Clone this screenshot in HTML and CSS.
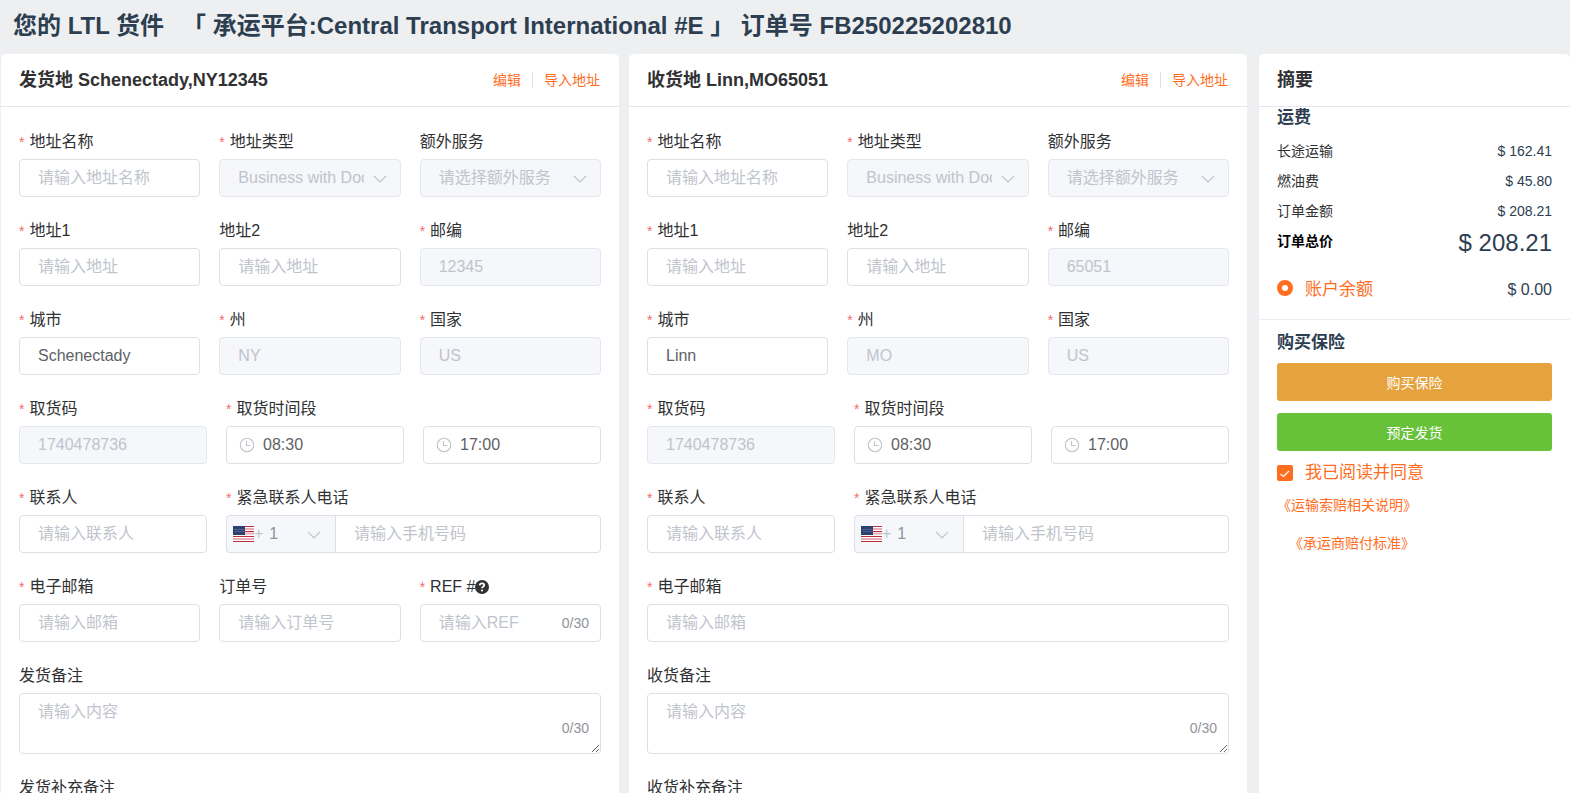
FILE: index.html
```html
<!DOCTYPE html>
<html lang="zh-CN">
<head>
<meta charset="utf-8">
<title>LTL 货件</title>
<link rel="stylesheet" href="styles.css">
</head>
<body>
<svg class="defs" aria-hidden="true">
  <symbol id="chevron" viewBox="0 0 14 8"><path d="M1 1l6 6 6-6" fill="none" stroke="currentColor" stroke-width="1.2"/></symbol>
  <symbol id="clock" viewBox="0 0 16 16"><circle cx="8" cy="8" r="6.7" fill="none" stroke="currentColor" stroke-width="1.1"/><path d="M7.5 4v4.500h4" fill="none" stroke="currentColor" stroke-width="1.1"/></symbol>
  <symbol id="flag" viewBox="0 0 21 16">
    <rect width="21" height="16" fill="#fff"/>
    <path d="M0 3h21M0 7.500h21M0 13h21" stroke="#e9aeb6" stroke-width="2"/>
    <path d="M0 .5h21M0 5.500h21M0 10.500h21M0 15.500h21" stroke="#b8303f" stroke-width="1"/>
    <rect width="12" height="9" fill="#2c4170"/>
    <path d="M1.500 3.500h10M2.500 5.500h9" stroke="#6f80a6" stroke-width="1" stroke-dasharray="1 1"/>
  </symbol>
  <symbol id="question" viewBox="0 0 14 14"><circle cx="7" cy="7" r="7" fill="#303133"/><path d="M4.700 5.400c.1-1.300 1.100-2 2.300-2s2.200.7 2.200 1.800c0 1.400-2.200 1.500-2.200 3" fill="none" stroke="#fff" stroke-width="1.800"/><circle cx="7" cy="10.500" r="1.100" fill="#fff"/></symbol>
</svg>

<header class="page-title">
  <h1><span>您的 LTL 货件</span><span class="platform">「 承运平台:Central Transport International #E 」 订单号 FB250225202810</span></h1>
</header>

<main class="layout">
  <div class="forms">
    <form class="panel">
      <div class="panel-head">
        <h2>发货地 Schenectady,NY12345</h2>
        <nav class="actions"><a href="#">编辑</a><a href="#">导入地址</a></nav>
      </div>
      <div class="panel-body">
        <div class="row thirds">
          <div class="field"><label class="required" for="s-name">地址名称</label><input id="s-name" type="text" placeholder="请输入地址名称"></div>
          <div class="field"><label class="required" for="s-type">地址类型</label><div class="control"><select id="s-type" disabled><option>Business with Dock</option></select><svg class="chevron"><use href="#chevron"/></svg></div></div>
          <div class="field"><label for="s-extra">额外服务</label><div class="control"><select id="s-extra" disabled><option>请选择额外服务</option></select><svg class="chevron"><use href="#chevron"/></svg></div></div>
        </div>
        <div class="row thirds">
          <div class="field"><label class="required" for="s-a1">地址1</label><input id="s-a1" type="text" placeholder="请输入地址"></div>
          <div class="field"><label for="s-a2">地址2</label><input id="s-a2" type="text" placeholder="请输入地址"></div>
          <div class="field"><label class="required" for="s-zip">邮编</label><input id="s-zip" type="text" value="12345" disabled></div>
        </div>
        <div class="row thirds">
          <div class="field"><label class="required" for="s-city">城市</label><input id="s-city" type="text" value="Schenectady"></div>
          <div class="field"><label class="required" for="s-state">州</label><input id="s-state" type="text" value="NY" disabled></div>
          <div class="field"><label class="required" for="s-country">国家</label><input id="s-country" type="text" value="US" disabled></div>
        </div>
        <div class="row split">
          <div class="field"><label class="required" for="s-code">取货码</label><input id="s-code" type="text" value="1740478736" disabled></div>
          <div class="field"><label class="required" for="s-from">取货时间段</label>
            <div class="times">
              <div class="control"><input id="s-from" class="time" type="text" value="08:30"><svg class="clock"><use href="#clock"/></svg></div>
              <div class="control"><input class="time" type="text" value="17:00" aria-label="结束时间"><svg class="clock"><use href="#clock"/></svg></div>
            </div>
          </div>
        </div>
        <div class="row split">
          <div class="field"><label class="required" for="s-contact">联系人</label><input id="s-contact" type="text" placeholder="请输入联系人"></div>
          <div class="field"><label class="required" for="s-phone">紧急联系人电话</label>
            <div class="phone">
              <div class="prefix"><svg class="flag"><use href="#flag"/></svg><span>+</span><select aria-label="国家区号"><option>1</option></select><svg class="chevron"><use href="#chevron"/></svg></div>
              <input id="s-phone" type="text" placeholder="请输入手机号码">
            </div>
          </div>
        </div>
        <div class="row thirds">
          <div class="field"><label class="required" for="s-mail">电子邮箱</label><input id="s-mail" type="text" placeholder="请输入邮箱"></div>
          <div class="field"><label for="s-order">订单号</label><input id="s-order" type="text" placeholder="请输入订单号"></div>
          <div class="field"><label class="required" for="s-ref">REF #<svg class="question"><use href="#question"/></svg></label><div class="control"><input id="s-ref" class="counted" type="text" placeholder="请输入REF"><span class="count">0/30</span></div></div>
        </div>
        <div class="row">
          <div class="field"><label for="s-note">发货备注</label><div class="control"><textarea id="s-note" placeholder="请输入内容"></textarea><span class="count low">0/30</span></div></div>
        </div>
        <div class="row">
          <div class="field"><label for="s-note2">发货补充备注</label><div class="control"><textarea id="s-note2" placeholder="请输入内容"></textarea></div></div>
        </div>
      </div>
    </form>

    <form class="panel">
      <div class="panel-head">
        <h2>收货地 Linn,MO65051</h2>
        <nav class="actions"><a href="#">编辑</a><a href="#">导入地址</a></nav>
      </div>
      <div class="panel-body">
        <div class="row thirds">
          <div class="field"><label class="required" for="r-name">地址名称</label><input id="r-name" type="text" placeholder="请输入地址名称"></div>
          <div class="field"><label class="required" for="r-type">地址类型</label><div class="control"><select id="r-type" disabled><option>Business with Dock</option></select><svg class="chevron"><use href="#chevron"/></svg></div></div>
          <div class="field"><label for="r-extra">额外服务</label><div class="control"><select id="r-extra" disabled><option>请选择额外服务</option></select><svg class="chevron"><use href="#chevron"/></svg></div></div>
        </div>
        <div class="row thirds">
          <div class="field"><label class="required" for="r-a1">地址1</label><input id="r-a1" type="text" placeholder="请输入地址"></div>
          <div class="field"><label for="r-a2">地址2</label><input id="r-a2" type="text" placeholder="请输入地址"></div>
          <div class="field"><label class="required" for="r-zip">邮编</label><input id="r-zip" type="text" value="65051" disabled></div>
        </div>
        <div class="row thirds">
          <div class="field"><label class="required" for="r-city">城市</label><input id="r-city" type="text" value="Linn"></div>
          <div class="field"><label class="required" for="r-state">州</label><input id="r-state" type="text" value="MO" disabled></div>
          <div class="field"><label class="required" for="r-country">国家</label><input id="r-country" type="text" value="US" disabled></div>
        </div>
        <div class="row split">
          <div class="field"><label class="required" for="r-code">取货码</label><input id="r-code" type="text" value="1740478736" disabled></div>
          <div class="field"><label class="required" for="r-from">取货时间段</label>
            <div class="times">
              <div class="control"><input id="r-from" class="time" type="text" value="08:30"><svg class="clock"><use href="#clock"/></svg></div>
              <div class="control"><input class="time" type="text" value="17:00" aria-label="结束时间"><svg class="clock"><use href="#clock"/></svg></div>
            </div>
          </div>
        </div>
        <div class="row split">
          <div class="field"><label class="required" for="r-contact">联系人</label><input id="r-contact" type="text" placeholder="请输入联系人"></div>
          <div class="field"><label class="required" for="r-phone">紧急联系人电话</label>
            <div class="phone">
              <div class="prefix"><svg class="flag"><use href="#flag"/></svg><span>+</span><select aria-label="国家区号"><option>1</option></select><svg class="chevron"><use href="#chevron"/></svg></div>
              <input id="r-phone" type="text" placeholder="请输入手机号码">
            </div>
          </div>
        </div>
        <div class="row">
          <div class="field"><label class="required" for="r-mail">电子邮箱</label><input id="r-mail" type="text" placeholder="请输入邮箱"></div>
        </div>
        <div class="row">
          <div class="field"><label for="r-note">收货备注</label><div class="control"><textarea id="r-note" placeholder="请输入内容"></textarea><span class="count low">0/30</span></div></div>
        </div>
        <div class="row">
          <div class="field"><label for="r-note2">收货补充备注</label><div class="control"><textarea id="r-note2" placeholder="请输入内容"></textarea></div></div>
        </div>
      </div>
    </form>
  </div>

  <aside class="panel summary">
    <div class="panel-head"><h2>摘要</h2></div>
    <section class="costs">
      <h3>运费</h3>
      <dl>
        <div><dt>长途运输</dt><dd>$ 162.41</dd></div>
        <div><dt>燃油费</dt><dd>$ 45.80</dd></div>
        <div><dt>订单金额</dt><dd>$ 208.21</dd></div>
        <div class="total"><dt>订单总价</dt><dd>$ 208.21</dd></div>
      </dl>
      <div class="balance">
        <label class="choice"><input type="radio" name="pay" checked>账户余额</label>
        <span>$ 0.00</span>
      </div>
    </section>
    <section class="checkout">
      <h3>购买保险</h3>
      <button class="insure" type="button">购买保险</button>
      <button class="book" type="button">预定发货</button>
      <label class="choice agree"><span class="tick"><input type="checkbox" checked><svg viewBox="0 0 16 16"><path d="M3.500 9l3 2.500L12 6" fill="none" stroke="#fff" stroke-width="1.200"/></svg></span>我已阅读并同意</label>
      <a class="terms" href="#">《运输索赔相关说明》</a>
      <a class="terms inset" href="#">《承运商赔付标准》</a>
    </section>
  </aside>
</main>
</body>
</html>
```

FILE: styles.css
```css
* { box-sizing: border-box; }

body {
  display: flex;
  flex-direction: column;
  height: 100vh;
  margin: 0;
  overflow: hidden;
  background: #edeff1;
  color: #2c3e50;
  font-family: "Liberation Sans", "Noto Sans CJK SC", sans-serif;
  font-size: 16px;
}

h1, h2, h3, dl, dd { margin: 0; }
a { color: #ff6d1f; text-decoration: none; }
.defs { display: none; }

.page-title {
  flex: none;
  padding: 0 13px 2px;
}
.page-title h1 {
  font-size: 24px;
  line-height: 52px;
  white-space: nowrap;
}
.platform { margin-left: 18px; }

.layout {
  display: grid;
  grid-template-columns: 1246fr 311fr;
  gap: 12px;
  flex: 1;
  min-height: 0;
  padding-left: 1px;
}
.forms {
  display: grid;
  grid-template-columns: 1fr 1fr;
  gap: 10px;
  min-height: 0;
}

.panel {
  min-width: 0;
  overflow: hidden;
  background: #fff;
  border-radius: 5px 5px 0 0;
}
.panel-head {
  display: flex;
  align-items: center;
  justify-content: space-between;
  height: 53px;
  padding: 0 19px 0 18px;
  border-bottom: 1px solid #e4e7ed;
}
.panel-head h2 {
  color: #303133;
  font-size: 18px;
  line-height: 24px;
}
.actions {
  display: flex;
  font-size: 14px;
  line-height: 16px;
}
.actions a + a {
  margin-left: 11px;
  padding-left: 11px;
  border-left: 1px solid #dcdfe6;
}

.panel-body { padding: 16px 18px; }
.row {
  display: grid;
  gap: 19px;
  margin-bottom: 15px;
}
.thirds { grid-template-columns: 1fr 1fr 1fr; }
.split { grid-template-columns: 188fr 375fr; }
.times {
  display: grid;
  grid-template-columns: 1fr 1fr;
  gap: 19px;
}
.field { min-width: 0; }
.field > label {
  display: flex;
  align-items: center;
  height: 36px;
  padding-top: 2px;
  color: #303133;
  line-height: 34px;
}
.required::before {
  content: "*";
  margin-right: 5px;
  color: #f56c6c;
  font-size: 14px;
}
.question { width: 14px; height: 14px; }

.control { position: relative; }
input[type="text"], select, textarea {
  display: block;
  width: 100%;
  height: 38px;
  margin: 0;
  padding: 0 18px;
  border: 1px solid #dcdfe6;
  border-radius: 4px;
  background: #fff;
  color: #606266;
  font: inherit;
  outline: none;
}
::placeholder { color: #c0c4cc; opacity: 1; }
select {
  appearance: none;
  padding-right: 36px;
  padding-bottom: 2px;
}
input[type="text"]:disabled, select:disabled {
  border-color: #e4e7ed;
  background: #f5f7fa;
  color: #c0c4cc;
  opacity: 1;
}
textarea {
  height: 61px;
  padding: 6px 18px;
  line-height: 24px;
  resize: vertical;
}
input.time { padding-left: 36px; }
input.counted { padding-right: 54px; }

.chevron {
  position: absolute;
  top: 16px;
  right: 14px;
  width: 14px;
  height: 8px;
  color: #c0c4cc;
  pointer-events: none;
}
.clock {
  position: absolute;
  top: 11px;
  left: 13px;
  width: 16px;
  height: 16px;
  color: #c0c4cc;
}
.count {
  position: absolute;
  top: 11px;
  right: 12px;
  color: #909399;
  font-size: 14px;
  line-height: 16px;
}
.count.low { top: 27px; }

.phone { display: flex; }
.prefix {
  position: relative;
  display: flex;
  flex: none;
  align-items: center;
  width: 109px;
  height: 38px;
  padding-left: 6px;
  border: 1px solid #dcdfe6;
  border-right: 0;
  border-radius: 4px 0 0 4px;
  background: #f5f7fa;
  color: #c0c4cc;
}
.prefix .flag { flex: none; width: 21px; height: 16px; }
.prefix select {
  height: 36px;
  padding: 0 30px 2px 6px;
  border: 0;
  background: transparent;
  color: #909399;
}
.prefix .chevron { top: 15px; }
.phone > input[type="text"] { border-radius: 0 4px 4px 0; }

.costs {
  padding: 0 18px;
  border-bottom: 1px solid #ebeef5;
}
.summary h3 { font-size: 17px; }
.costs h3 { line-height: 22px; }
.costs dl { padding-top: 7px; }
.costs dl div {
  display: flex;
  justify-content: space-between;
  font-size: 14px;
  line-height: 30px;
}
.costs dt { color: #303133; }
.costs .total dt { color: #000; font-weight: bold; }
.costs .total dd { font-size: 24px; line-height: 34px; }
.balance {
  display: flex;
  align-items: center;
  justify-content: space-between;
  height: 59px;
}
.balance .choice { align-items: flex-start; }
.choice {
  display: flex;
  align-items: center;
  gap: 12px;
  color: #ff6d1f;
  font-size: 17px;
  line-height: 24px;
}
input[type="radio"] {
  appearance: none;
  width: 16px;
  height: 16px;
  margin: 2px 0 0;
  border: 5px solid #ff6d1f;
  border-radius: 50%;
  background: #fff;
}
.tick { position: relative; width: 16px; height: 16px; }
.tick input {
  display: block;
  appearance: none;
  width: 16px;
  height: 16px;
  margin: 0;
  border-radius: 2px;
  background: #ff6d1f;
}
.tick svg { position: absolute; inset: 0; }

.checkout {
  display: flex;
  flex-direction: column;
  padding: 1px 18px 0;
}
.checkout h3 { padding-top: 2px; line-height: 40px; }
button {
  height: 38px;
  padding: 0;
  border: 0;
  border-radius: 3px;
  color: #fff;
  font: inherit;
  font-size: 14px;
}
.insure { margin-bottom: 12px; background: #e6a23c; }
.book { background: #67c23a; }
.agree { height: 42px; padding-top: 2px; }
.terms {
  margin-bottom: 14px;
  font-size: 14px;
  line-height: 24px;
}
.inset { padding-left: 12px; }
```
